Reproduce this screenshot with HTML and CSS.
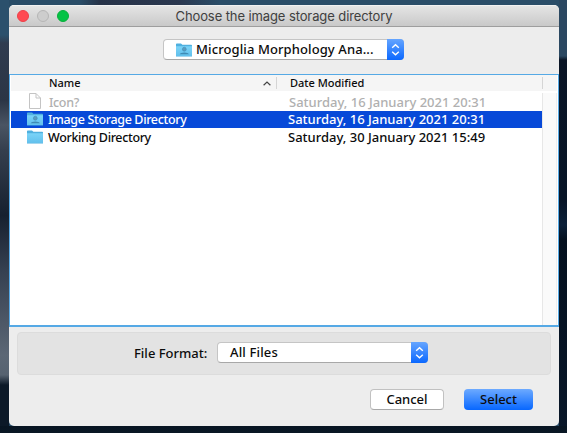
FILE: index.html
```html
<!DOCTYPE html>
<html lang="en">
<head>
<meta charset="utf-8">
<title>Choose the image storage directory</title>
<link rel="stylesheet" href="styles.css">
</head>
<body>
<svg class="defs" width="0" height="0" aria-hidden="true">
  <linearGradient id="blue" x1="0" y1="0" x2="0" y2="1"><stop offset="0" stop-color="#7bd4f8"/><stop offset="1" stop-color="#62c0ec"/></linearGradient>
  <symbol id="folder" viewBox="0 0 16 14">
    <path d="M0 1.2Q0 .4.8.4H5L6.4 1.8H15.2Q16 1.8 16 2.6V13.6H0Z" fill="#4fb0df"/>
    <path d="M0 3.2H16V13H0Z" fill="url(#blue)"/>
  </symbol>
  <symbol id="person" viewBox="0 0 16 14">
    <use href="#folder" width="16" height="14"/>
    <ellipse cx="8.3" cy="6.2" rx="1.9" ry="2" fill="#5a9cc0" stroke="#3f8bb5" stroke-width=".6"/>
    <path d="M3.7 11.3Q4.5 9.5 8.3 9.5T12.9 11.3Z" fill="#3f8bb5"/>
  </symbol>
  <symbol id="arrows" viewBox="0 0 17 20">
    <path d="M5.2 8.2 8.5 5.2 11.8 8.2M5.2 12.2 8.5 15.2 11.8 12.2" fill="none" stroke="#fff" stroke-width="1.4"/>
  </symbol>
</svg>
<main class="window">
  <header class="titlebar">
    <div class="lights"><i class="close"></i><i class="minimize"></i><i class="zoom"></i></div>
    <h1>Choose the image storage directory</h1>
  </header>
  <div class="location">
    <div class="select place">
      <svg class="icon"><use href="#person"/></svg>
      <span>Microglia Morphology Ana...</span>
      <svg class="stepper"><use href="#arrows"/></svg>
    </div>
  </div>
  <section class="files">
    <div class="head">
      <span class="name">Name</span>
      <svg class="sort" viewBox="0 0 8 5"><path d="M.6 4.2 4 1 7.4 4.2" fill="none" stroke="#444" stroke-width="1.2"/></svg>
      <span class="date">Date Modified</span>
    </div>
    <div class="body">
      <div class="rows">
        <div class="row disabled">
          <svg class="icon" viewBox="0 0 16 16"><path d="M2.5.5H9L13.5 5V15.5H2.5ZM9 .5V5H13.5" fill="#fff" stroke="#c4c4c4"/></svg>
          <span class="file">Icon?</span><span>Saturday, 16 January 2021 20:31</span>
        </div>
        <div class="row selected">
          <svg class="icon"><use href="#person"/></svg>
          <span class="file">Image Storage Directory</span><span>Saturday, 16 January 2021 20:31</span>
        </div>
        <div class="row">
          <svg class="icon"><use href="#folder"/></svg>
          <span class="file">Working Directory</span><span>Saturday, 30 January 2021 15:49</span>
        </div>
      </div>
      <div class="scroll"></div>
    </div>
  </section>
  <section class="format">
    <label>File Format:</label>
    <div class="select filter"><span>All Files</span><svg class="stepper"><use href="#arrows"/></svg></div>
  </section>
  <footer>
    <button class="cancel">Cancel</button>
    <button class="choose">Select</button>
  </footer>
</main>
</body>
</html>
```
FILE: styles.css
```css
* { box-sizing: border-box; }
body {
  margin: 0; width: 567px; height: 433px; padding: 5px 8px 7px 9px; overflow: hidden;
  font: 500 13px/16px "Noto Sans", sans-serif; color: #0c0c0c;
  background:
    linear-gradient(#081522, #091725) 0 426px / 567px 7px no-repeat,
    linear-gradient(#2b4861 0 56px, #0a1525 60px, #071426 200px, #0c2139 225px, #04101e 240px, #091729) 559px 0 / 8px 433px no-repeat,
    linear-gradient(#2b506c 0 35px, #303c50 43px, #2b3545 100px, #4a5563 125px, #353f4e 150px, #16202f 215px, #354050 270px, #5c6775 355px, #566270 375px, #0c1928 385px) 0 0 / 9px 433px no-repeat,
    linear-gradient(90deg, #294c67 80px, #263247 100px, #2b3850 180px, #2a4d68 220px);
}
.defs { position: absolute; }
.window { width: 550px; height: 421px; background: #ededed; border-radius: 5px; overflow: hidden; display: flex; flex-direction: column; }
.titlebar { height: 22px; flex: none; display: grid; grid-template-columns: 60px 1fr 60px; background: linear-gradient(#e4e4e4, #c9c9c9); border-top: 1px solid #f1f1f1; border-bottom: 1px solid #9e9e9e; }
.lights { display: flex; gap: 8px; padding: 4px 0 0 8px; }
.lights i { width: 12px; height: 12px; border-radius: 50%; }
.close { background: #ff4a52; border: 1px solid #ed4149; }
.minimize { background: #cdcdcd; border: 1px solid #b5b5b5; }
.zoom { background: #05c345; border: 1px solid #08af3c; }
h1 { margin: 0; font: 400 13px/21px Inter, sans-serif; letter-spacing: -.1px; color: #404040; text-align: center; white-space: nowrap; }
span { white-space: nowrap; }
.location { height: 47px; flex: none; padding: 12px 0 0 154px; }
.select { position: relative; display: flex; background: #fff; border: 1px solid #c5c5c5; border-bottom-color: #a8a8a8; border-radius: 4px; height: 21px; align-items: center; }
.select span { margin-top: -2px; }
.place { width: 241px; padding-left: 12px; gap: 4px; letter-spacing: .1px; }
.stepper { position: absolute; right: -1px; top: -1px; width: 17px; height: 21px; border-radius: 0 4px 4px 0; background: linear-gradient(#65a5ff, #0b68ff); }
.icon { width: 16px; height: 14px; flex: none; }
.files { height: 253px; flex: none; background: #fff; border: 1px solid #55a9e5; border-bottom-width: 2px; display: flex; flex-direction: column; }
.head { height: 16px; margin: 0 1px; background: #f5f5f5; display: flex; align-items: center; font-size: 11px; }
.name { width: 214px; padding-left: 38px; }
.head .sort { width: 8px; height: 5px; margin-left: 38px; }
.date { height: 12px; line-height: 12px; width: 267px; border-left: 1px solid #d5d5d5; border-right: 1px solid #d5d5d5; margin-left: 5px; padding-left: 13px; }
.body { flex: 1; display: flex; padding: 2px 1px 0; }
.rows { width: 531px; padding-top: 1px; }
.row { height: 17px; display: flex; align-items: center; padding-left: 16px; }
.row span { margin-top: -2px; }
.row .file { margin-top: 0; }
.row:last-child { height: 18px; padding-top: 1px; }
.row .icon { margin: -2px 5px 0 0; }
.row.disabled .icon { height: 16px; margin: -4px 6px 0 0; }
.file { width: 240px; font-size: 12.5px; letter-spacing: -.35px; }
.disabled { color: #b0b0b0; }
.selected { background: #0749d8; color: #fff; }
.scroll { flex: 1; background: #fafafa; border-left: 1px solid #e7e7e7; border-right: 1px solid #ededed; }
.format { height: 43px; flex: none; margin: 5px 8px 0; background: #e3e3e3; border: 1px solid #dcdcdc; border-radius: 4px; display: flex; padding: 9px 0 0 116px; }
label { width: 83px; line-height: 22px; }
.filter { width: 211px; padding-left: 12px; letter-spacing: .15px; }
footer { display: flex; gap: 20px; padding: 14px 0 0 361px; }
button { height: 21px; border-radius: 4px; font: inherit; padding: 0 0 2px; color: #0c0c0c; }
.cancel { width: 74px; background: #fff; border: 1px solid #c1c1c1; border-bottom-color: #a8a8a8; }
.choose { width: 69px; border: 0; background: linear-gradient(#6daaff, #0767ff); }
```
